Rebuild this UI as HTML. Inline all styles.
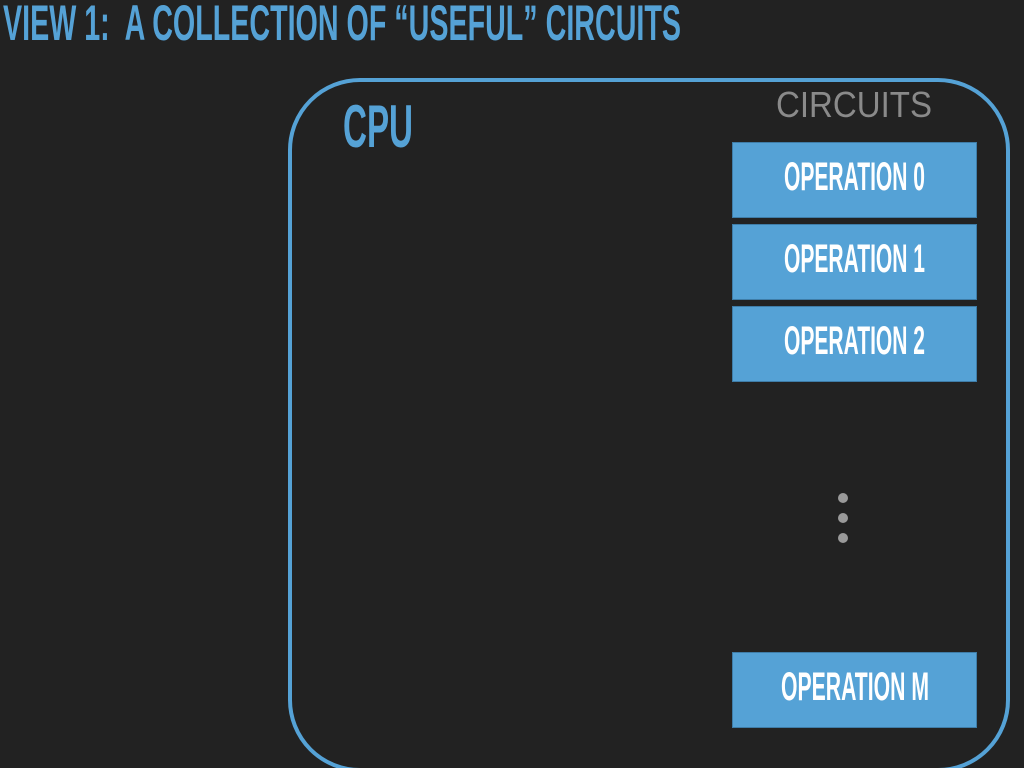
<!DOCTYPE html>
<html><head><meta charset="utf-8"><style>
html,body{margin:0;padding:0;width:1024px;height:768px;overflow:hidden;}
body{background:#222222;position:relative;font-family:"Liberation Sans",sans-serif;}
.t{position:absolute;white-space:nowrap;font-weight:bold;transform-origin:0 0;line-height:1;}
.op{position:absolute;left:732px;width:245px;height:76px;background:#55a2d6;box-shadow:0 0 0 1px #3f7da8 inset;}
.dot{position:absolute;left:838px;width:10px;height:10px;border-radius:50%;background:#9a9a9a;}
</style></head><body>
<div class="t fit" data-w="678" style="left:3px;top:-2px;font-size:50px;color:#55a2d6;">VIEW 1:&nbsp; A COLLECTION OF “USEFUL” CIRCUITS</div>
<div style="position:absolute;left:288px;top:78px;width:714px;height:686px;border:4px solid #55a2d6;border-radius:72px;"></div>
<div class="t fit" data-w="70" style="left:343px;top:97px;font-size:60px;color:#55a2d6;">CPU</div>
<div class="t fit" data-w="156" style="left:776px;top:87px;font-size:36px;font-weight:normal;color:#8a8a8a;">CIRCUITS</div>
<div class="op" style="top:142px"></div>
<div class="op" style="top:224px"></div>
<div class="op" style="top:306px"></div>
<div class="op" style="top:652px"></div>
<div class="t fit" data-w="141" style="left:784px;top:157px;font-size:40px;color:#fff;">OPERATION 0</div>
<div class="t fit" data-w="141" style="left:784px;top:239px;font-size:40px;color:#fff;">OPERATION 1</div>
<div class="t fit" data-w="141" style="left:784px;top:321px;font-size:40px;color:#fff;">OPERATION 2</div>
<div class="t fit" data-w="148" style="left:781px;top:667px;font-size:40px;color:#fff;">OPERATION M</div>
<div class="dot" style="top:493px"></div>
<div class="dot" style="top:513px"></div>
<div class="dot" style="top:533px"></div>
<script>
document.querySelectorAll('.fit').forEach(function(e){
  var w=e.getBoundingClientRect().width;var t=+e.dataset.w;
  e.style.transform='scaleX('+(t/w)+')';
});
</script>
</body></html>
